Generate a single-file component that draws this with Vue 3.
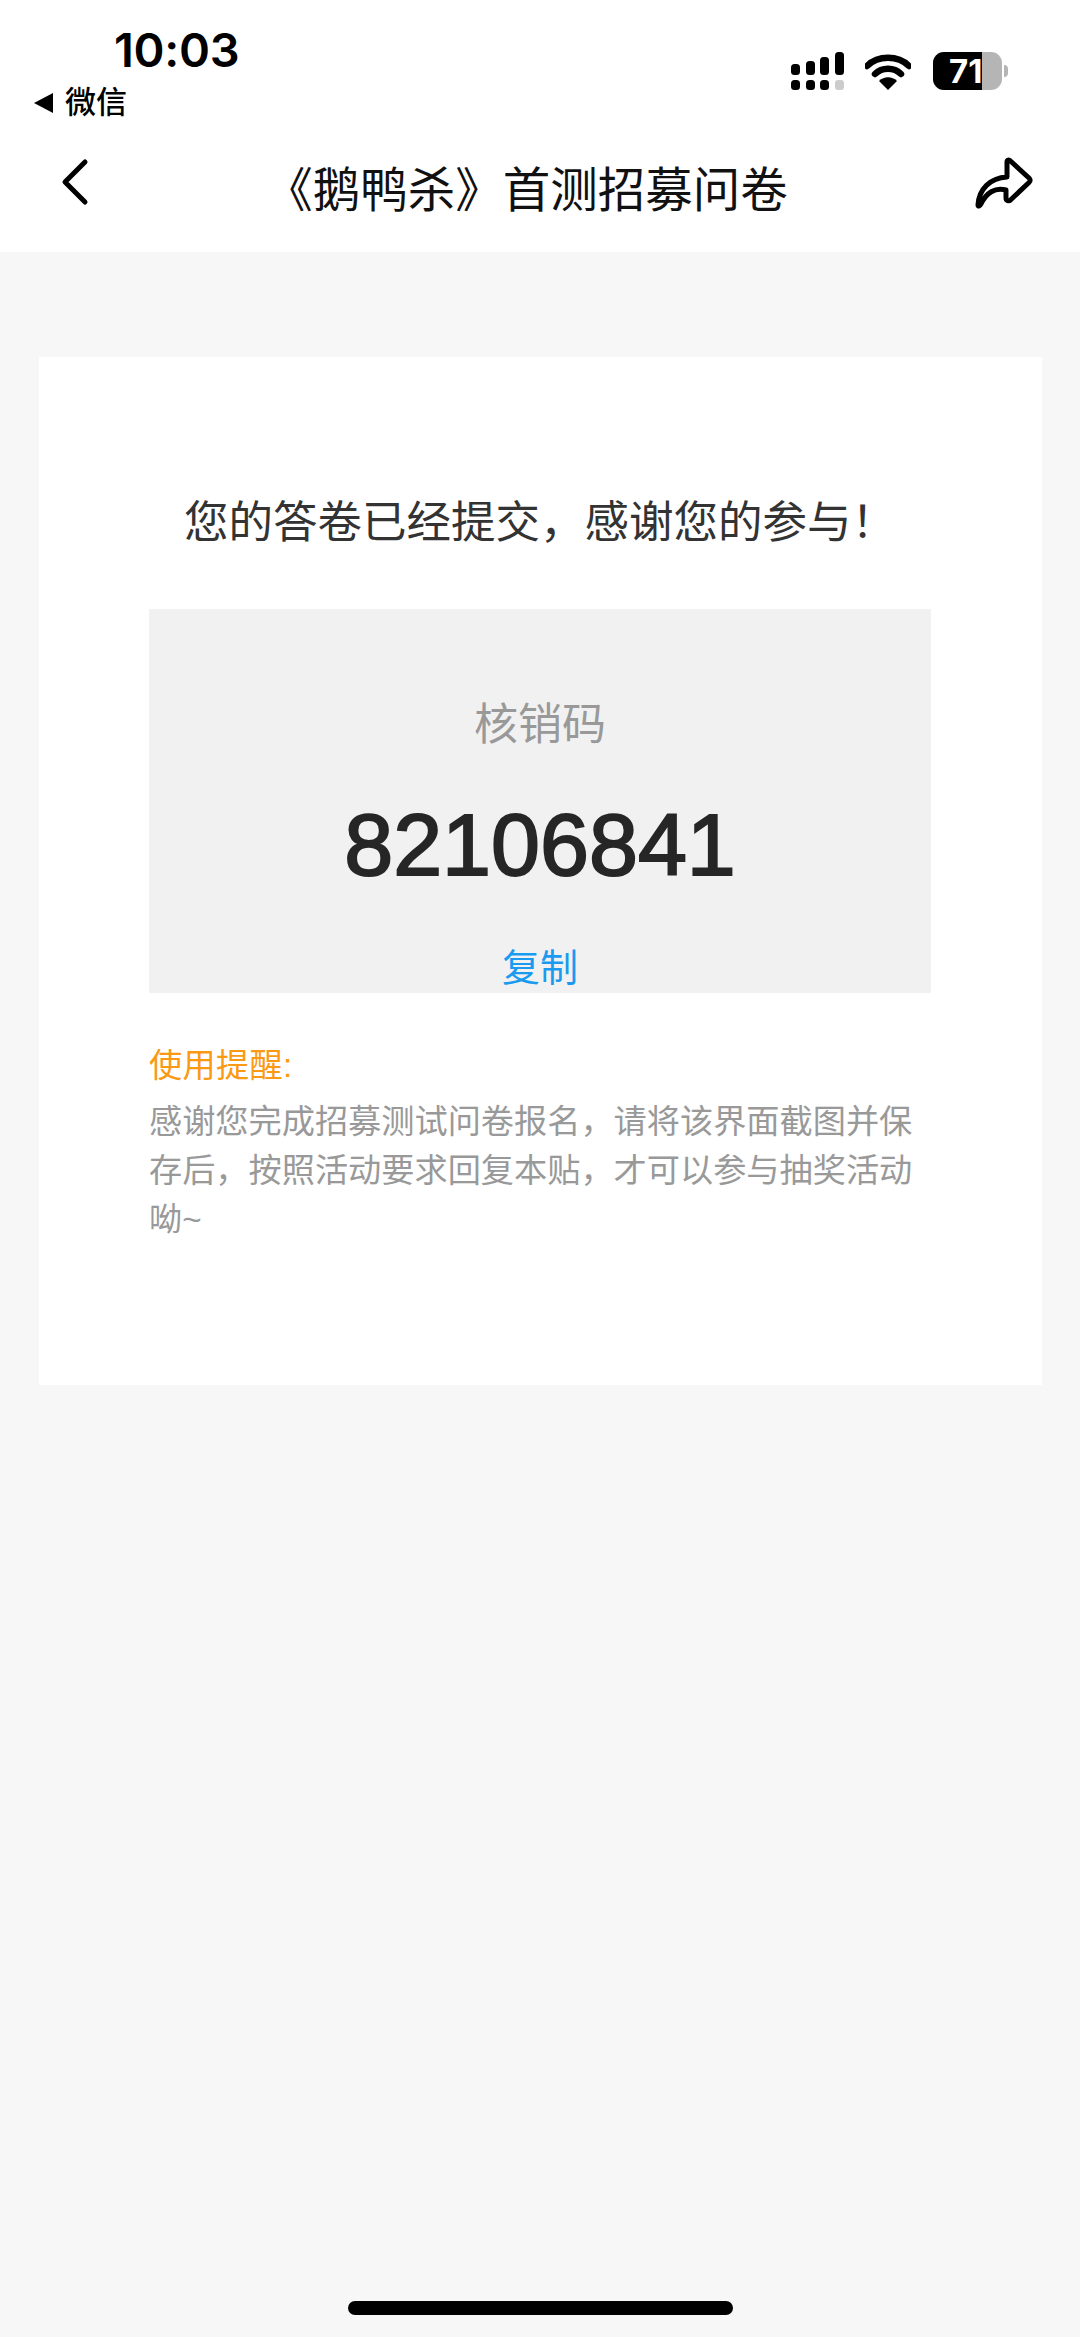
<script setup>
const code = '82106841'
</script>

<template>
  <div class="page">
    <header class="top">
      <div class="status">
        <div class="left">
          <div class="time">10:03</div>
          <div class="back-app"><span class="tri"></span>微信</div>
        </div>
        <div class="right">
          <svg class="signal" width="56" height="40" viewBox="0 0 56 40">
            <rect x="1" y="12" width="9" height="11" rx="3.5" fill="#000"/>
            <rect x="16" y="9" width="9" height="14" rx="3.5" fill="#000"/>
            <rect x="30" y="5" width="9" height="18" rx="3.5" fill="#000"/>
            <rect x="45" y="0" width="9" height="23" rx="3.5" fill="#000"/>
            <rect x="1" y="28" width="9" height="10" rx="3.5" fill="#000"/>
            <rect x="16" y="28" width="9" height="10" rx="3.5" fill="#000"/>
            <rect x="30" y="28" width="9" height="10" rx="3.5" fill="#000"/>
            <rect x="45" y="28" width="9" height="10" rx="3" fill="#ccc"/>
          </svg>
          <svg class="wifi" width="46" height="36" viewBox="0 0 46 36">
            <path d="M2 12 C13 1 33 1 44 12" fill="none" stroke="#000" stroke-width="6.5" stroke-linecap="round"/>
            <path d="M10 20 C17 13 29 13 36 20" fill="none" stroke="#000" stroke-width="6.5" stroke-linecap="round"/>
            <path d="M14 27 C19 22 27 22 32 27 L23 36 Z" fill="#000"/>
          </svg>
          <div class="battery">
            <div class="batt-body"><div class="batt-fill"></div><span class="batt-num">71</span></div>
            <span class="batt-cap"></span>
          </div>
        </div>
      </div>
      <div class="nav">
        <svg class="nav-back" width="32" height="48" viewBox="0 0 32 48">
          <path d="M25 4 L5 24 L25 44" fill="none" stroke="#000" stroke-width="5" stroke-linecap="round" stroke-linejoin="round"/>
        </svg>
        <div class="title">《鹅鸭杀》首测招募问卷</div>
        <svg class="nav-share" width="58" height="52" viewBox="0 0 58 52">
          <path d="M3 48 C4 32 15 21 32 20 L32 5 C32 3 34 2.500 35.500 4 L54 21 C55.500 22.500 55.500 24 54 25.500 L35.500 43 C34 44.500 31 44 31 41 L31 33 C20 30 11 36 6 47 C5 49 3 50 3 48 Z" fill="none" stroke="#000" stroke-width="5" stroke-linejoin="round"/>
        </svg>
      </div>
    </header>

    <main class="card">
      <p class="msg">您的答卷已经提交&#xFF0C;感谢您的参与&#xFF01;</p>
      <section class="code-box">
        <div class="code-label">核销码</div>
        <div class="code-num">{{ code }}</div>
        <div class="copy">复制</div>
      </section>
      <section class="tip">
        <div class="tip-head">使用提醒:</div>
        <p class="tip-body">感谢您完成招募测试问卷报名&#xFF0C;请将该界面截图并保存后&#xFF0C;按照活动要求回复本贴&#xFF0C;才可以参与抽奖活动呦~</p>
      </section>
    </main>

    <div class="home"></div>
  </div>
</template>

<style>
html, body { margin: 0; background: #f7f7f7; }
</style>

<style scoped>
.page {
  width: 1080px;
  height: 2337px;
  background: #f7f7f7;
  position: relative;
  overflow: hidden;
  font-family: "Liberation Sans", "Noto Sans CJK SC", sans-serif;
}
.top { height: 252px; background: #fff; box-sizing: border-box; }
.status {
  height: 125px;
  display: flex;
  justify-content: space-between;
  box-sizing: border-box;
}
.left { padding-left: 34px; }
.time {
  margin: 24px 0 0 80px;
  font: 600 47px/52px Inter, "Liberation Sans", sans-serif;
  letter-spacing: -0.3px;
  color: #000;
}
.back-app {
  display: flex;
  align-items: center;
  font-size: 31px;
  line-height: 36px;
  font-weight: 500;
  color: #000;
  margin-top: 9px;
}
.tri {
  width: 0;
  height: 0;
  border-style: solid;
  border-width: 10px 19px 10px 0;
  border-color: transparent #000 transparent transparent;
  margin-right: 12px;
}
.right {
  display: flex;
  align-items: flex-start;
  padding-top: 52px;
  padding-right: 72px;
}
.wifi { margin-left: 19px; margin-top: 2px; }
.battery { display: flex; align-items: center; margin-left: 22px; height: 38px; }
.batt-body {
  width: 69px;
  height: 38px;
  border-radius: 11px;
  background: #b5b5b5;
  position: relative;
  overflow: hidden;
}
.batt-fill { width: 49px; height: 38px; background: #000; }
.batt-num {
  position: absolute;
  left: 16px;
  top: 0;
  width: 34px;
  overflow: hidden;
  font: 700 33px/38px Inter, "Liberation Sans", sans-serif;
  color: #fff;
}
.batt-cap {
  width: 4px;
  height: 12px;
  background: #b5b5b5;
  border-radius: 0 5px 5px 0;
  margin-left: 2px;
}
.nav {
  height: 127px;
  display: flex;
  align-items: center;
  padding: 0 47px 0 60px;
  box-sizing: border-box;
}
.nav-back { margin-top: -14px; flex: none; }
.nav-share { margin-top: -11px; flex: none; }
.title {
  flex: 1;
  font-size: 47.500px;
  line-height: 60px;
  color: #111;
  text-align: center;
  padding-right: 14px;
  margin-top: 4px;
}
.card {
  margin: 105px 38px 0 39px;
  height: 1028px;
  background: #fff;
  box-sizing: border-box;
  padding: 0 111px 0 110px;
}
.msg {
  margin: 0;
  padding-top: 136px;
  height: 252px;
  box-sizing: border-box;
  white-space: nowrap;
  text-align: center;
  font-size: 44.500px;
  line-height: 60px;
  color: #333;
}
.code-box {
  height: 384px;
  background: #f1f1f1;
  text-align: center;
  box-sizing: border-box;
  padding-top: 88px;
}
.code-label { font-size: 44px; line-height: 56px; color: #999; }
.code-num {
  font-size: 88px;
  line-height: 100px;
  margin-top: 42px;
  color: #262626;
  font-family: "Liberation Sans", sans-serif;
  -webkit-text-stroke: 2px #262626;
}
.copy { font-size: 38px; line-height: 50px; color: #1a9bef; margin-top: 48px; }
.tip { padding-top: 51px; font-size: 33.200px; line-height: 49px; }
.tip-head { color: #fa9a14; height: 44px; line-height: 44px; letter-spacing: 0.3px; }
.tip-body { margin: 9px 0 0; color: #999; }
.home {
  position: absolute;
  left: 348px;
  top: 2301px;
  width: 385px;
  height: 14px;
  border-radius: 7px;
  background: #000;
}
</style>
